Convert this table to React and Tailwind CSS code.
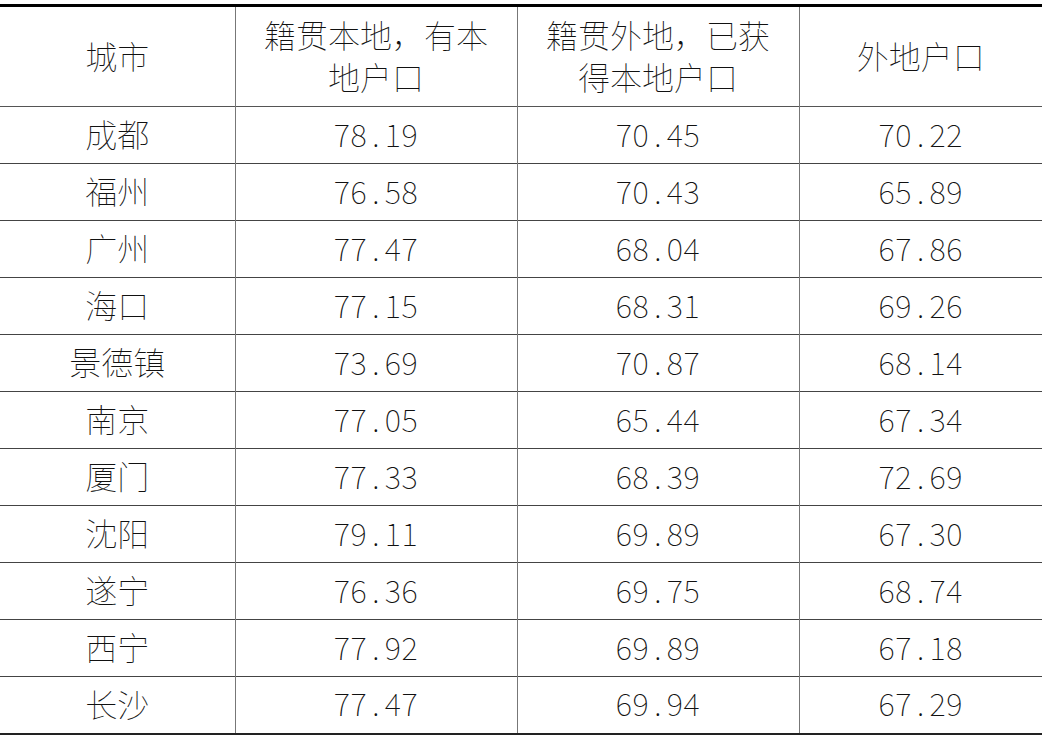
import React from "react";

const rows = [
  ["成都", "78.19", "70.45", "70.22"],
  ["福州", "76.58", "70.43", "65.89"],
  ["广州", "77.47", "68.04", "67.86"],
  ["海口", "77.15", "68.31", "69.26"],
  ["景德镇", "73.69", "70.87", "68.14"],
  ["南京", "77.05", "65.44", "67.34"],
  ["厦门", "77.33", "68.39", "72.69"],
  ["沈阳", "79.11", "69.89", "67.30"],
  ["遂宁", "76.36", "69.75", "68.74"],
  ["西宁", "77.92", "69.89", "67.18"],
  ["长沙", "77.47", "69.94", "67.29"],
];

function Num({ v }) {
  const [a, b] = v.split(".");
  return (
    <span className="tracking-[0.5px]">
      {a}
      <span className="px-[5px]">.</span>
      {b}
    </span>
  );
}

export default function App() {
  return (
    <div
      className="w-[1042px] h-[746px] bg-white pt-1 text-[#111]"
      style={{ fontFamily: '"Noto Sans CJK SC", "Noto Sans", sans-serif' }}
    >
      <table className="w-[1042px] table-fixed border-collapse border-t-[3px] border-b-2 border-t-black border-b-[#222] font-thin">
        <colgroup>
          <col className="w-[235px]" />
          <col className="w-[282px]" />
          <col className="w-[282px]" />
          <col className="w-[243px]" />
        </colgroup>
        <thead>
          <tr className="h-[101px] border-b border-[#555]">
            <th className="font-thin text-[32px] leading-[42px] text-center pb-1">城市</th>
            <th className="font-thin text-[32px] leading-[42px] text-center border-l border-[#777] pb-1">
              籍贯本地，有本
              <br />
              地户口
            </th>
            <th className="font-thin text-[32px] leading-[42px] text-center border-l border-[#777] pb-1">
              籍贯外地，已获
              <br />
              得本地户口
            </th>
            <th className="font-thin text-[32px] leading-[42px] text-center border-l border-[#777] pb-1">外地户口</th>
          </tr>
        </thead>
        <tbody>
          {rows.map((r, i) => (
            <tr key={i} className={`h-[57px] ${i < rows.length - 1 ? "border-b border-[#444]" : ""}`}>
              <td className="text-center text-[32px] leading-none pb-1">{r[0]}</td>
              {r.slice(1).map((v, j) => (
                <td key={j} className="text-center text-[31px] leading-none border-l border-[#777] pb-1">
                  <Num v={v} />
                </td>
              ))}
            </tr>
          ))}
        </tbody>
      </table>
    </div>
  );
}
